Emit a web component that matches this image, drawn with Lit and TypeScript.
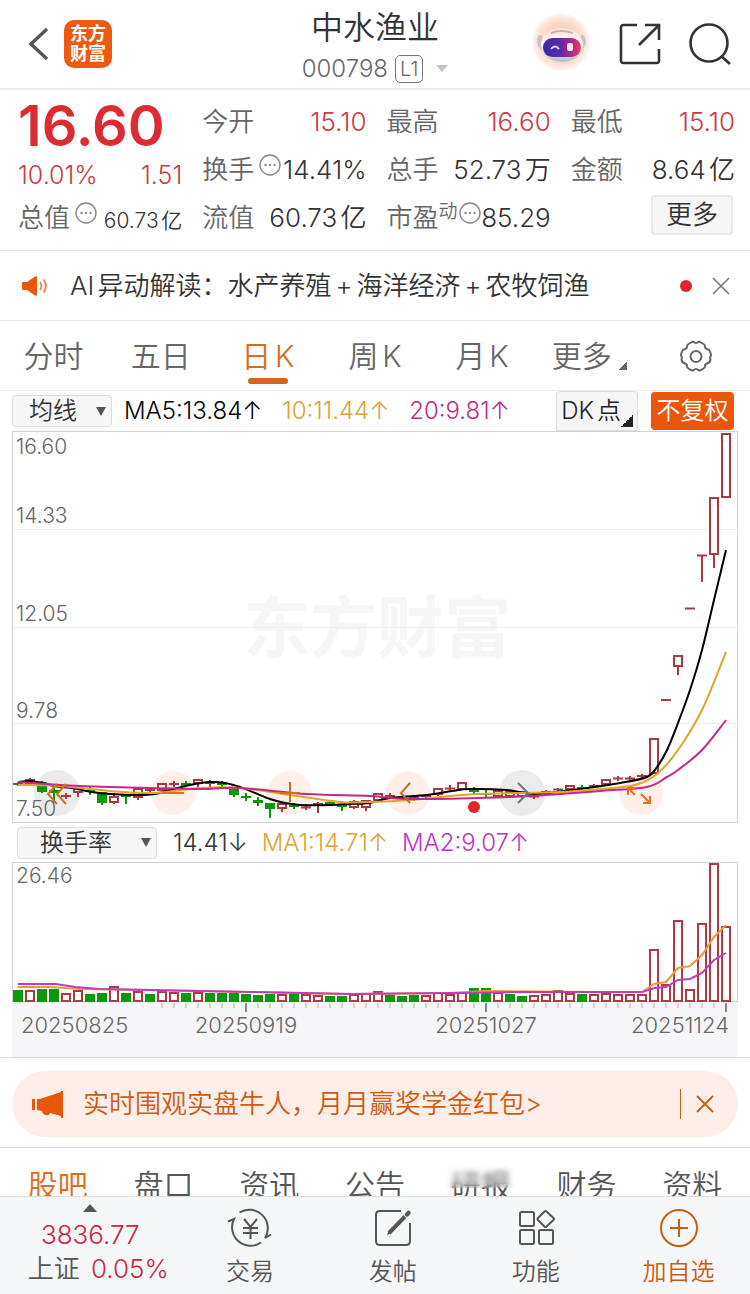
import { LitElement, html, svg, css } from "lit";
import { customElement, state } from "lit/decorators.js";
import { classMap } from "lit/directives/class-map.js";

type Point = [number, number];
// direction, body top, body bottom, high, low
type Candle = ["u" | "d", number, number, number, number];

const STEP = 12;
const FIRST = 6;

const CANDLES: Candle[] = [
  ["d", 352, 354, 351, 355], ["u", 349, 353, 347, 354], ["d", 351, 361, 350, 362], ["d", 359, 362, 355, 372],
  ["u", 364, 366, 362, 368], ["u", 357, 362, 356, 366], ["d", 359, 361, 356, 364], ["d", 361, 372, 361, 374],
  ["u", 366, 372, 362, 373], ["d", 364, 366, 364, 373], ["u", 358, 367, 357, 369], ["u", 358, 360, 356, 362],
  ["u", 353, 360, 352, 360], ["u", 352, 354, 350, 356], ["d", 352, 355, 350, 356], ["u", 349, 353, 348, 356],
  ["u", 351, 353, 349, 357], ["d", 352, 354, 350, 356], ["d", 358, 364, 358, 366], ["d", 365, 367, 362, 370],
  ["d", 369, 372, 366, 375], ["d", 372, 378, 372, 387], ["u", 373, 378, 371, 381], ["d", 374, 376, 372, 378],
  ["u", 375, 378, 373, 379], ["u", 372, 374, 371, 382], ["d", 371, 373, 370, 374], ["d", 374, 376, 373, 380],
  ["u", 371, 377, 369, 378], ["u", 370, 377, 369, 380], ["u", 363, 370, 362, 370], ["u", 364, 366, 362, 368],
  ["u", 366, 368, 365, 369], ["u", 366, 368, 364, 370], ["u", 364, 366, 364, 368], ["u", 358, 364, 357, 365],
  ["u", 356, 359, 354, 361], ["u", 352, 359, 351, 359], ["d", 358, 361, 356, 364], ["d", 362, 364, 359, 367],
  ["u", 360, 366, 360, 367], ["u", 361, 366, 360, 367], ["u", 361, 366, 360, 367], ["u", 364, 367, 364, 368],
  ["u", 360, 362, 359, 363], ["u", 357, 360, 357, 360], ["u", 355, 359, 354, 359], ["d", 356, 358, 354, 359],
  ["u", 354, 356, 353, 357], ["u", 349, 354, 349, 354], ["u", 346, 349, 345, 350], ["u", 346, 349, 345, 350],
  ["u", 344, 346, 343, 348], ["u", 308, 343, 308, 343], ["u", 268, 270, 268, 270], ["u", 225, 236, 225, 244],
  ["u", 177, 178, 177, 178], ["u", 124, 125, 124, 151], ["u", 67, 124, 67, 137], ["u", 3, 67, 3, 67],
];

const VOLUMES = [
  12, 11, 13, 13, 8, 11, 8, 9, 15, 9, 10, 8, 10, 9, 9, 9, 9, 9, 9, 8, 7, 8, 7, 8, 7, 6, 6, 6, 7, 8,
  10, 7, 6, 7, 6, 9, 7, 9, 14, 14, 9, 8, 6, 6, 7, 11, 8, 8, 7, 8, 7, 7, 7, 52, 17, 81, 12, 78, 138, 75,
];
const VOLUME_DOWN = new Set([0, 2, 3, 6, 7, 9, 11, 14, 16, 17, 18, 19, 20, 21, 23, 26, 27, 31, 32, 33, 38, 39, 41, 42, 47]);

const MA5: Point[] = [[6, 351], [18, 350], [30, 352], [42, 355], [60, 357], [80, 361], [98, 363], [128, 364], [143, 363], [158, 359], [178, 354], [198, 351], [213, 352], [228, 356], [243, 362], [258, 368], [273, 372], [288, 374], [318, 374], [338, 373], [358, 372], [378, 367], [415, 364], [440, 360], [458, 358], [495, 359], [523, 363], [568, 358], [608, 352], [635, 346], [645, 336], [655, 319], [666, 292], [678, 259], [690, 219], [702, 169], [714, 119]];
const MA10: Point[] = [[6, 354], [48, 355], [98, 360], [143, 362], [188, 357], [228, 357], [278, 364], [328, 371], [358, 371], [398, 369], [438, 365], [468, 363], [508, 362], [548, 361], [588, 358], [623, 354], [645, 343], [666, 319], [690, 279], [714, 221]];
const MA20: Point[] = [[6, 351], [48, 354], [98, 356], [138, 357], [188, 358], [228, 357], [295, 363], [358, 365], [395, 368], [468, 367], [518, 365], [588, 360], [635, 356], [655, 346], [666, 339], [690, 319], [714, 289]];
const VMA1: Point[] = [[6, 125], [38, 125], [68, 127], [138, 128], [238, 130], [338, 132], [438, 131], [474, 129], [588, 130], [630, 130], [642, 122], [654, 120], [666, 106], [678, 104], [690, 93], [702, 75], [714, 63]];
const VMA2: Point[] = [[6, 122], [44, 122], [63, 125], [88, 127], [138, 128], [238, 130], [338, 132], [438, 131], [508, 130], [588, 130], [630, 130], [643, 126], [654, 125], [666, 118], [678, 117], [690, 111], [702, 98], [714, 91]];

/** Catmull-Rom curve through the given points. */
function curve(p: Point[]): string {
  let d = `M${p[0][0]} ${p[0][1]}`;
  for (let i = 0; i < p.length - 1; i++) {
    const a = p[Math.max(i - 1, 0)];
    const b = p[i];
    const c = p[i + 1];
    const e = p[Math.min(i + 2, p.length - 1)];
    d += `C${b[0] + (c[0] - a[0]) / 6} ${b[1] + (c[1] - a[1]) / 6} ${c[0] - (e[0] - b[0]) / 6} ${c[1] - (e[1] - b[1]) / 6} ${c[0]} ${c[1]}`;
  }
  return d;
}

const straight = (p: Point[]) => "M" + p.map((q) => q.join(" ")).join("L");

@customElement("price-chart")
export class PriceChart extends LitElement {
  static styles = css`
    :host { display: block; }
    svg { display: block; width: 100%; height: auto; }
    .frame { fill: none; stroke: #d2d2d2; }
    .grid { stroke: #eeeeee; stroke-width: 1; }
    .mark { font-size: 67px; font-weight: 700; fill: #f6f6f6; }
    .scale { font-size: 21px; fill: #666; }
    .up { fill: #fff; stroke: #a93a42; stroke-width: 2; }
    .up-line { stroke: #a93a42; stroke-width: 2; }
    .down { fill: #0a990a; }
    .down-line { stroke: #0a990a; stroke-width: 2; }
    .line { fill: none; stroke-width: 2; }
    .ma5 { stroke: #000; }
    .ma10 { stroke: #e3a32e; }
    .ma20 { stroke: #c32a86; }
    .pad { fill: #999; opacity: 0.2; }
    .pad-warm { fill: #f9a27a; opacity: 0.17; }
    .glyph { fill: none; stroke-width: 2; stroke: #c8702a; }
    .glyph-grey { stroke: #777; }
    .glyph-hot { stroke: #ee6a22; }
    .dot { fill: #e3222b; }
  `;

  private candle([dir, top, bottom, high, low]: Candle, i: number) {
    const x = FIRST + i * STEP;
    const thin = bottom - top < 4;
    if (dir === "d") {
      return svg`<line class="down-line" x1=${x} x2=${x} y1=${high} y2=${low}></line>
        <rect class="down" x=${x - 5} y=${top} width="10" height=${bottom - top}></rect>`;
    }
    return svg`<line class="up-line" x1=${x} x2=${x} y1=${high} y2=${low}></line>
      ${thin
        ? svg`<line class="up-line" x1=${x - 5} x2=${x + 5} y1=${(top + bottom) / 2} y2=${(top + bottom) / 2}></line>`
        : svg`<rect class="up" x=${x - 4} y=${top} width="8" height=${bottom - top - 1}></rect>`}`;
  }

  render() {
    return html`<svg viewBox="0 0 726 392" role="img" aria-label="日K">
      <text class="mark" x="365" y="221" text-anchor="middle">东方财富</text>
      <rect class="frame" x="0.5" y="0.5" width="725" height="391"></rect>
      ${[98, 196, 292].map((y) => svg`<line class="grid" x1="1" x2="725" y1=${y + 0.5} y2=${y + 0.5}></line>`)}
      ${[161, 278, 396, 629].map((x) => svg`<circle class="pad-warm" cx=${x} cy="362" r="22"></circle>`)}
      ${[45, 510].map((x) => svg`<circle class="pad" cx=${x} cy="362" r="23"></circle>`)}
      ${CANDLES.map((c, i) => this.candle(c, i))}
      ${[["16.60", 23], ["14.33", 92], ["12.05", 190], ["9.78", 287], ["7.50", 385]].map(
        ([t, y]) => svg`<text class="scale" x="4" y=${y}>${t}</text>`
      )}
      <path class="line ma5" d=${curve(MA5)}></path>
      <path class="line ma10" d=${curve(MA10)}></path>
      <path class="line ma20" d=${curve(MA20)}></path>
      <path class="glyph" d="M45 353l-9 10 9 10M54 353l-9 10 9 10"></path>
      <path class="glyph glyph-hot" d="M150 362h22"></path>
      <path class="glyph" d="M278 351v20M268 362h20"></path>
      <path class="glyph" d="M398 352l-9 10 9 10"></path>
      <path class="glyph glyph-grey" d="M506 352l10 10-10 10"></path>
      <path class="glyph glyph-hot" d="M616 364v-7h7M616 357l7 7M638 365v7h-7M629 363l9 9"></path>
      <circle class="dot" cx="462" cy="376" r="6"></circle>
    </svg>`;
  }
}

@customElement("volume-chart")
export class VolumeChart extends LitElement {
  static styles = css`
    :host { display: block; background: #f6f6f9; }
    svg { display: block; width: 100%; height: auto; }
    .plot { fill: #fff; stroke: #d2d2d2; }
    .up { fill: #fff; stroke: #b03a42; stroke-width: 2; }
    .down { fill: #0a990a; }
    .tick { stroke: #b5b5b5; }
    .tick-major { stroke: #888; stroke-width: 2; }
    .line { fill: none; stroke-width: 2; }
    .vma1 { stroke: #ee9a3a; }
    .vma2 { stroke: #c13bbd; }
    .scale { font-size: 21px; fill: #666; }
    .date { font-size: 22px; fill: #666; }
  `;

  render() {
    return html`<svg viewBox="0 0 726 195" role="img" aria-label="换手率">
      <rect class="plot" x="0.5" y="0.5" width="725" height="139"></rect>
      <text class="scale" x="4" y="21">26.46</text>
      ${VOLUMES.map((h, i) => {
        const x = FIRST + i * STEP;
        return VOLUME_DOWN.has(i)
          ? svg`<rect class="down" x=${x - 5} y=${140 - h} width="10" height=${h}></rect>`
          : svg`<rect class="up" x=${x - 4} y=${140 - h} width="8" height=${h - 1}></rect>`;
      })}
      <path class="line vma1" d=${straight(VMA1)}></path>
      <path class="line vma2" d=${straight(VMA2)}></path>
      ${VOLUMES.map((_, i) => {
        const x = FIRST + i * STEP;
        const major = i % 20 === 19;
        return i < 12 ? null : svg`<line class=${major ? "tick-major" : "tick"} x1=${x} x2=${x} y1="141" y2=${major ? 150 : 146}></line>`;
      })}
      <text class="date" x="9" y="171">20250825</text>
      <text class="date" x="234" y="171" text-anchor="middle">20250919</text>
      <text class="date" x="474" y="171" text-anchor="middle">20251027</text>
      <text class="date" x="717" y="171" text-anchor="end">20251124</text>
    </svg>`;
  }
}

const more = html`<svg class="info" viewBox="0 0 22 22" aria-hidden="true">
  <circle cx="11" cy="11" r="10" fill="none" stroke="#888" stroke-width="1.4"></circle>
  <g fill="#888"><circle cx="6.5" cy="11" r="1.2"></circle><circle cx="11" cy="11" r="1.2"></circle><circle cx="15.5" cy="11" r="1.2"></circle></g>
</svg>`;

@customElement("app-root")
export class AppRoot extends LitElement {
  static styles = css`
    :host {
      display: flex;
      flex-direction: column;
      height: 100vh;
      overflow: hidden;
      background: #fff;
      color: #333;
      font-family: Inter, "Noto Sans CJK SC", sans-serif;
      font-size: 24px;
      line-height: 32px;
      font-weight: 350;
      text-autospace: normal;
      text-spacing-trim: space-all;
    }
    * { box-sizing: border-box; }
    button, select {
      font: inherit;
      color: inherit;
      border: 0;
      padding: 0;
      margin: 0;
      background: none;
      appearance: none;
      text-autospace: inherit;
      white-space: nowrap;
    }
    a { color: inherit; text-decoration: none; }
    svg { display: block; flex: none; }
    main { flex: 1; min-height: 0; overflow-y: auto; scrollbar-width: none; }

    .top {
      display: grid;
      grid-template-columns: 1fr auto 1fr;
      height: 90px;
      padding: 0 18px;
      border-bottom: 2px solid #ececec;
    }
    .side { display: flex; align-items: center; gap: 12px; }
    .back { margin-left: 8px; }
    .side-end { justify-content: flex-end; gap: 26px; }
    .logo {
      display: grid;
      place-content: center;
      width: 48px;
      height: 48px;
      border-radius: 10px;
      background: #ee5a12;
      color: #fff;
      font-size: 18px;
      line-height: 20px;
      font-weight: 700;
      text-align: center;
    }
    .title { margin: 0; padding-top: 6px; font-size: 32px; line-height: 44px; font-weight: 350; text-align: center; }
    .code { display: flex; align-items: center; justify-content: center; gap: 7px; height: 37px; color: #666; }
    .level { border: 1px solid #777; border-radius: 5px; padding: 0 4px; font-size: 20px; line-height: 26px; }
    .caret { margin-left: 6px; }

    .quote {
      display: grid;
      grid-template-columns: repeat(4, 1fr);
      grid-template-rows: repeat(3, 48px);
      column-gap: 20px;
      height: 161px;
      margin: 0;
      padding: 8px 15px 0 18px;
      border-bottom: 1px solid #e8e8e8;
    }
    .cell { display: flex; align-items: center; justify-content: space-between; white-space: nowrap; }
    .cell dt { display: flex; color: #666; font-size: 26px; }
    .cell dd { margin: 0; font-size: 26px; }
    .cell .small { padding-top: 6px; font-size: 21px; }
    .info { width: 22px; height: 22px; margin-left: 5px; }
    .sup { font-size: 19px; line-height: 20px; }
    .sup + .info { margin-left: 1px; }
    .price { font-size: 56px; font-weight: 600; color: #dd2b33; padding-top: 8px; }
    .red { color: #cc3a42; }
    .change { font-size: 25px; padding-top: 10px; }
    .more-btn { place-self: center end; width: 82px; height: 40px; margin: 0 2px 6px 0; border: 2px solid #e8e8e8; border-radius: 4px; background: #f6f6f6; font-size: 26px; line-height: 34px; }

    .notice { display: flex; align-items: center; height: 70px; padding: 0 20px 0 22px; border-bottom: 1px solid #e8e8e8; font-size: 26px; white-space: nowrap; }
    .notice a { flex: 1; margin-left: 22px; }
    .plus { margin: 0 4px; }
    .alert { width: 12px; height: 12px; margin-right: 20px; border-radius: 50%; background: #e3222b; }

    .tabs { display: grid; grid-template-columns: repeat(7, 1fr); height: 70px; color: #666; font-size: 30px; border-bottom: 1px solid #eee; }
    .tabs button { display: flex; align-items: center; justify-content: center; position: relative; }
    .on { color: #e06a1c; }
    .tabs .on::after { content: ""; position: absolute; bottom: 6px; width: 40px; height: 6px; border-radius: 3px; background: #d9631a; }
    .corner { width: 9px; height: 9px; margin: 20px 0 0 6px; background: linear-gradient(135deg, transparent 50%, #666 50%); }

    .bar { display: flex; align-items: center; height: 40px; padding: 0 12px; white-space: nowrap; }
    .picker { display: flex; align-items: center; position: relative; }
    .picker select { width: 100px; height: 32px; padding-left: 16px; border: 1px solid #ddd; border-radius: 4px; background: #f7f7f7; font-size: 24px; line-height: 30px; }
    .picker .wide { width: 140px; padding-left: 22px; }
    .picker svg { position: absolute; right: 6px; pointer-events: none; }
    .legend { display: flex; gap: 20px; margin-left: 12px; }
    .legend-turn { gap: 14px; margin-left: 16px; }
    .bar-turn { height: 39px; padding-left: 17px; }
    .k { color: #000; }
    .y { color: #dfa236; }
    .p { color: #bd2c8c; }
    .v { color: #bd35c4; }
    .dk { display: flex; align-items: center; height: 40px; margin-left: auto; padding: 0 4px; border: 1px solid #ddd; border-radius: 4px 4px 0 0; background: #f6f6f6; color: #222; }
    .dk i { width: 12px; height: 12px; margin-top: 20px; background: linear-gradient(135deg, transparent 50%, #222 50%); }
    .fq { width: 83px; height: 38px; margin: 0 4px 0 13px; border-radius: 4px; background: #ea560b; color: #fff; font-size: 24px; }

    .plots { margin: 0 12px; }
    .promo-wrap { padding: 13px 12px 10px; border: solid #ddd; border-width: 1px 0; }
    .promo { display: flex; align-items: center; height: 66px; padding: 0 23px 0 20px; border-radius: 33px; background: #fdeee7; color: #cf5a14; font-size: 26px; white-space: nowrap; }
    .promo a { flex: 1; margin-left: 20px; }
    .rule { width: 1px; height: 30px; margin-right: 14px; background: #cf5a14; }

    .sections { display: grid; grid-template-columns: repeat(7, 1fr); padding: 0 5px; height: 74px; color: #555; font-size: 30px; }
    .hazy { position: relative; }
    .hazy::after { content: ""; position: absolute; left: 10px; right: 10px; top: 18px; height: 22px; backdrop-filter: blur(3px); }

    .dock { display: grid; grid-template-columns: 5fr 4fr 4fr 4fr 4fr; flex: none; height: 98px; border-top: 1px solid #ddd; background: #f6f7f9; color: #555; }
    .dock button { display: flex; flex-direction: column; align-items: center; padding-top: 11px; gap: 5px; line-height: 38px; }
    .dock .index { gap: 0; padding: 7px 0 0 18px; font-size: 26px; line-height: 36px; }
    .index svg { margin-bottom: 7px; }
    .index svg, .index .points { margin-right: 16px; }
    .points { line-height: 32px; }
    .points, .pct { color: #c9283e; }
    .pct { margin-left: 8px; }
    .dock .add { color: #cf5a14; }
  `;

  @state() private period = "日K";
  @state() private section = "股吧";

  private cell(label: unknown, value: string, cls = "") {
    return html`<div class="cell"><dt>${label}</dt><dd class=${cls}>${value}</dd></div>`;
  }

  private arrow() {
    return html`<svg width="10" height="9" viewBox="0 0 10 9" aria-hidden="true"><path d="M0 0h10L5 9z" fill="#555"></path></svg>`;
  }

  render() {
    return html`
      <main>
        <header class="top">
          <div class="side">
            <button class="back" aria-label="返回">
              <svg width="26" height="36" viewBox="0 0 26 36"><path d="M21 3L5 18l16 15" fill="none" stroke="#555" stroke-width="3.4"></path></svg>
            </button>
            <span class="logo">东方<br />财富</span>
          </div>
          <div>
            <h1 class="title">中水渔业</h1>
            <div class="code">
              <span>000798</span><span class="level">L1</span>
              <svg class="caret" width="12" height="7" viewBox="0 0 12 7"><path d="M0 0h12L6 7z" fill="#c4c4c4"></path></svg>
            </div>
          </div>
          <div class="side side-end">
            <button aria-label="AI助手">
              <svg width="62" height="62" viewBox="0 0 62 62">
                <defs>
                  <radialGradient id="halo" cx=".5" cy=".5" r=".5"><stop offset=".6" stop-color="#fbd3c4"></stop><stop offset=".85" stop-color="#fde6dc"></stop><stop offset="1" stop-color="#fff8f5"></stop></radialGradient>
                  <linearGradient id="head" x1="0" y1="0" x2="0" y2="1"><stop offset="0" stop-color="#fbe0d8"></stop><stop offset=".4" stop-color="#fff7f3"></stop><stop offset="1" stop-color="#b9bccb"></stop></linearGradient>
                  <linearGradient id="visor"><stop offset="0" stop-color="#3a2a9e"></stop><stop offset=".45" stop-color="#5a2aa8"></stop><stop offset=".8" stop-color="#b92a86"></stop><stop offset="1" stop-color="#e0455c"></stop></linearGradient>
                </defs>
                <circle cx="31" cy="29" r="29" fill="url(#halo)"></circle>
                <path d="M9 22q4-1 4 6v10q-5-3-6-8 0-6 2-8zM53 22q-3-1-3 6v10q5-3 6-8 0-6-3-8z" fill="#c9c2cb"></path>
                <ellipse cx="32" cy="32" rx="21" ry="17" fill="url(#head)"></ellipse>
                <path d="M21 20q10-4 22 0" fill="none" stroke="#c9b4b0" stroke-width="2"></path>
                <rect x="13" y="25" width="38" height="19" rx="9.500" fill="url(#visor)"></rect>
                <path d="M21 36q4-5 8 0" fill="none" stroke="#c8dcff" stroke-width="2"></path>
                <rect x="37" y="30" width="6" height="8" rx="2" fill="#ffe3f2"></rect>
              </svg>
            </button>
            <button aria-label="分享">
              <svg width="44" height="44" viewBox="0 0 44 44"><path d="M19 3H5.500Q3 3 3 5.500v33Q3 41 5.500 41h33q2.500 0 2.500-2.500V27M27 3h14v15M41 3L21 23" fill="none" stroke="#333" stroke-width="2.600"></path></svg>
            </button>
            <button aria-label="搜索">
              <svg width="44" height="44" viewBox="0 0 44 44"><circle cx="21" cy="21" r="18.500" fill="none" stroke="#333" stroke-width="2.600"></circle><path d="M33 34l9 8" stroke="#333" stroke-width="2.800"></path></svg>
            </button>
          </div>
        </header>

        <dl class="quote">
          <div class="cell price">16.60</div>
          ${this.cell("今开", "15.10", "red")} ${this.cell("最高", "16.60", "red")} ${this.cell("最低", "15.10", "red")}
          <div class="cell red change"><span>10.01%</span><span>1.51</span></div>
          ${this.cell(html`换手${more}`, "14.41%")} ${this.cell("总手", "52.73万")} ${this.cell("金额", "8.64亿")}
          ${this.cell(html`总值${more}`, "60.73亿", "small")} ${this.cell("流值", "60.73亿")}
          ${this.cell(html`市盈<span class="sup">动</span>${more}`, "85.29")}
          <button class="more-btn">更多</button>
        </dl>

        <section class="notice">
          <svg width="26" height="20" viewBox="0 0 26 20"><path d="M1 6h4l8-5.500q2-1 2 1v17q0 2-2 1L5 14H1q-1 0-1-1V7q0-1 1-1z" fill="#ea560b"></path><path d="M18 6q3 4 0 8M21.500 3.500q5 6.500 0 13" fill="none" stroke="#f08048" stroke-width="1.800"></path></svg>
          <a href="#ai">AI异动解读：水产养殖<span class="plus">+</span>海洋经济<span class="plus">+</span>农牧饲渔</a>
          <span class="alert"></span>
          <button aria-label="关闭"><svg width="18" height="18" viewBox="0 0 18 18"><path d="M1 1l16 16M17 1L1 17" stroke="#777" stroke-width="1.600"></path></svg></button>
        </section>

        <nav class="tabs">
          ${["分时", "五日", "日K", "周K", "月K"].map(
            (t) => html`<button class=${classMap({ on: t === this.period })} @click=${() => (this.period = t)}>${t}</button>`
          )}
          <button>更多<i class="corner"></i></button>
          <button aria-label="设置">
            <svg width="34" height="34" viewBox="0 0 34 34" fill="none" stroke="#666" stroke-width="2"><path d="M12 3.500q2-1.500 3.500 0 1.500 1 3 0 1.500-1.500 3.500 0l2.500 1.500q1.500 1 1.500 2.500 0 2 2 2.500 2.500.500 3 2.500l1 3q.500 1-.500 2-1 1 0 3-.500 3.500-3.500 4-2 .500-2 2.500 0 1.500-1.500 2.500L22 31q-2 1-3.500-.500-1.500-1-3 0Q14 32 12 31l-2.500-1.500Q8 28.500 8 27q0-2-2-2.500-3-.500-3.500-4 1-2 0-3-1-1-.500-2l1-3q.500-2 3-2.500Q8 9.500 8 7.500 8 6 9.500 5z"></path><circle cx="17" cy="17.500" r="5.500"></circle></svg>
          </button>
        </nav>

        <div class="bar">
          <label class="picker"><select aria-label="主图指标"><option>均线</option></select>${this.arrow()}</label>
          <div class="legend"><span class="k">MA5:13.84↑</span><span class="y">10:11.44↑</span><span class="p">20:9.81↑</span></div>
          <button class="dk">DK点<i></i></button>
          <button class="fq">不复权</button>
        </div>
        <div class="plots"><price-chart></price-chart></div>
        <div class="bar bar-turn">
          <label class="picker"><select class="wide" aria-label="副图指标"><option>换手率</option></select>${this.arrow()}</label>
          <div class="legend legend-turn"><span>14.41↓</span><span class="y">MA1:14.71↑</span><span class="v">MA2:9.07↑</span></div>
        </div>
        <div class="plots"><volume-chart></volume-chart></div>

        <div class="promo-wrap">
          <div class="promo">
            <svg width="31" height="27" viewBox="0 0 31 27" fill="#ea560b"><path d="M0 8h3v11H0zM5 8h3l21-7V0h2v27h-2v-2l-11-3q-1 3-4 2-4-1-4-4l-5-1z"></path></svg>
            <a href="#promo">实时围观实盘牛人，月月赢奖学金红包&gt;</a>
            <span class="rule"></span>
            <button aria-label="关闭"><svg width="20" height="20" viewBox="0 0 20 20"><path d="M2 2l16 16M18 2L2 18" stroke="#cf5a14" stroke-width="1.800"></path></svg></button>
          </div>
        </div>

        <nav class="sections">
          ${["股吧", "盘口", "资讯", "公告", "研报", "财务", "资料"].map(
            (t) => html`<button class=${classMap({ on: t === this.section, hazy: t === "研报" })} @click=${() => (this.section = t)}>${t}</button>`
          )}
        </nav>
      </main>

      <footer class="dock">
        <button class="index">
          <svg width="14" height="8" viewBox="0 0 14 8"><path d="M7 0l7 8H0z" fill="#555"></path></svg>
          <span class="points">3836.77</span>
          <span>上证<span class="pct">0.05%</span></span>
        </button>
        <button>
          <svg width="46" height="40" viewBox="0 0 46 40" fill="none" stroke="#555" stroke-width="2"><path d="M12.500 4.500A18.500 18.500 0 0 1 38 30l6-3.500M34 34.500A18.500 18.500 0 0 1 7 11l-6 2.500"></path><path d="M17 11l6.500 8 6.500-8M16 20h15M16 25h15M23.500 19v12"></path></svg>交易
        </button>
        <button>
          <svg width="40" height="40" viewBox="0 0 40 40" fill="none" stroke="#555" stroke-width="2"><path d="M28 3H7Q3 3 3 7v26q0 4 4 4h26q4 0 4-4V15"></path><path d="M16 25L32 8.500" stroke-width="4"></path><path d="M34 6.500l1.500-1.500" stroke-width="4.500" stroke-linecap="round"></path><path d="M14 27l2-5 3 3z" fill="#555" stroke="none"></path></svg>发帖
        </button>
        <button>
          <svg width="40" height="40" viewBox="0 0 40 40" fill="none" stroke="#555" stroke-width="2"><rect x="4" y="4" width="14" height="14" rx="1.500"></rect><rect x="4" y="22" width="14" height="14" rx="1.500"></rect><rect x="23" y="22" width="14" height="14" rx="1.500"></rect><path d="M28.500 3.500q1-1 2 0l7 6.500q1 1 0 2l-7 6.500q-1 1-2 0l-6.500-6.500q-1-1 0-2z"></path></svg>功能
        </button>
        <button class="add">
          <svg width="40" height="40" viewBox="0 0 40 40" fill="none" stroke="#cf5a14" stroke-width="2"><circle cx="20" cy="20" r="18"></circle><path d="M20 11v18M11 20h18"></path></svg>加自选
        </button>
      </footer>
    `;
  }
}
